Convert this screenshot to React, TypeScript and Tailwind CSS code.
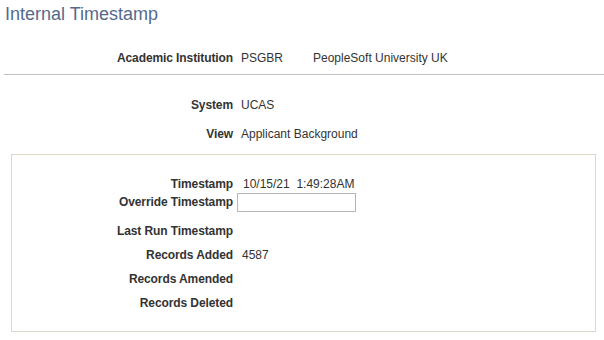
import React from "react";

const font = { fontFamily: '"Liberation Sans", Arial, sans-serif' };

function Row({
  label,
  children,
  labelW,
  gap,
  className = "",
}: {
  label: string;
  children?: React.ReactNode;
  labelW: string;
  gap: string;
  className?: string;
}) {
  return (
    <div className={`flex items-start h-[16px] ${className}`}>
      <div className={`${labelW} shrink-0 text-right font-bold text-[12px] leading-[16px] tracking-[-0.1px] text-[#333333] whitespace-nowrap`}>
        {label}
      </div>
      <div className={`${gap} flex items-start text-[12px] leading-[16px] text-[#333333] whitespace-pre`}>
        {children}
      </div>
    </div>
  );
}

export default function App() {
  return (
    <div className="w-[604px] h-[340px] bg-white overflow-hidden" style={font}>
      <div className="pt-[4px] pl-[5px] h-[24px] text-[18px] leading-[20px] text-[#546a8c] whitespace-nowrap">
        Internal Timestamp
      </div>

      <div className="mt-[26px] flex items-start h-[16px]">
        <div className="w-[233px] shrink-0 text-right font-bold text-[12px] leading-[16px] tracking-[-0.1px] text-[#333333]">
          Academic Institution
        </div>
        <div className="ml-[8px] w-[72px] text-[12px] leading-[16px] text-[#333333]">PSGBR</div>
        <div className="text-[12px] leading-[16px] text-[#333333] whitespace-nowrap">PeopleSoft University UK</div>
      </div>

      <div className="mt-[8px] ml-[4px] border-t border-[#c0c0c0]" />

      <Row label="System" labelW="w-[233px]" gap="ml-[8px]" className="mt-[22px]">
        UCAS
      </Row>
      <Row label="View" labelW="w-[233px]" gap="ml-[8px]" className="mt-[13px]">
        Applicant Background
      </Row>

      <div className="mt-[12px] ml-[11px] w-[585px] h-[178px] border border-[#ddd8c4] pt-[21px]">
        <Row label="Timestamp" labelW="w-[221px]" gap="ml-[10px]">
          {"10/15/21  1:49:28AM"}
        </Row>
        <div className="mt-[1px] flex items-start h-[19px]">
          <div className="w-[221px] shrink-0 pt-[1px] text-right font-bold text-[12px] leading-[16px] tracking-[-0.1px] text-[#333333] whitespace-nowrap">
            Override Timestamp
          </div>
          <input
            className="ml-[4px] w-[119px] h-[19px] border border-[#b5b5b5] bg-white outline-none"
            type="text"
          />
        </div>
        <Row label="Last Run Timestamp" labelW="w-[221px]" gap="ml-[9px]" className="mt-[11px]" />
        <Row label="Records Added" labelW="w-[221px]" gap="ml-[9px]" className="mt-[8px]">
          4587
        </Row>
        <Row label="Records Amended" labelW="w-[221px]" gap="ml-[9px]" className="mt-[8px]" />
        <Row label="Records Deleted" labelW="w-[221px]" gap="ml-[9px]" className="mt-[8px]" />
      </div>
    </div>
  );
}
